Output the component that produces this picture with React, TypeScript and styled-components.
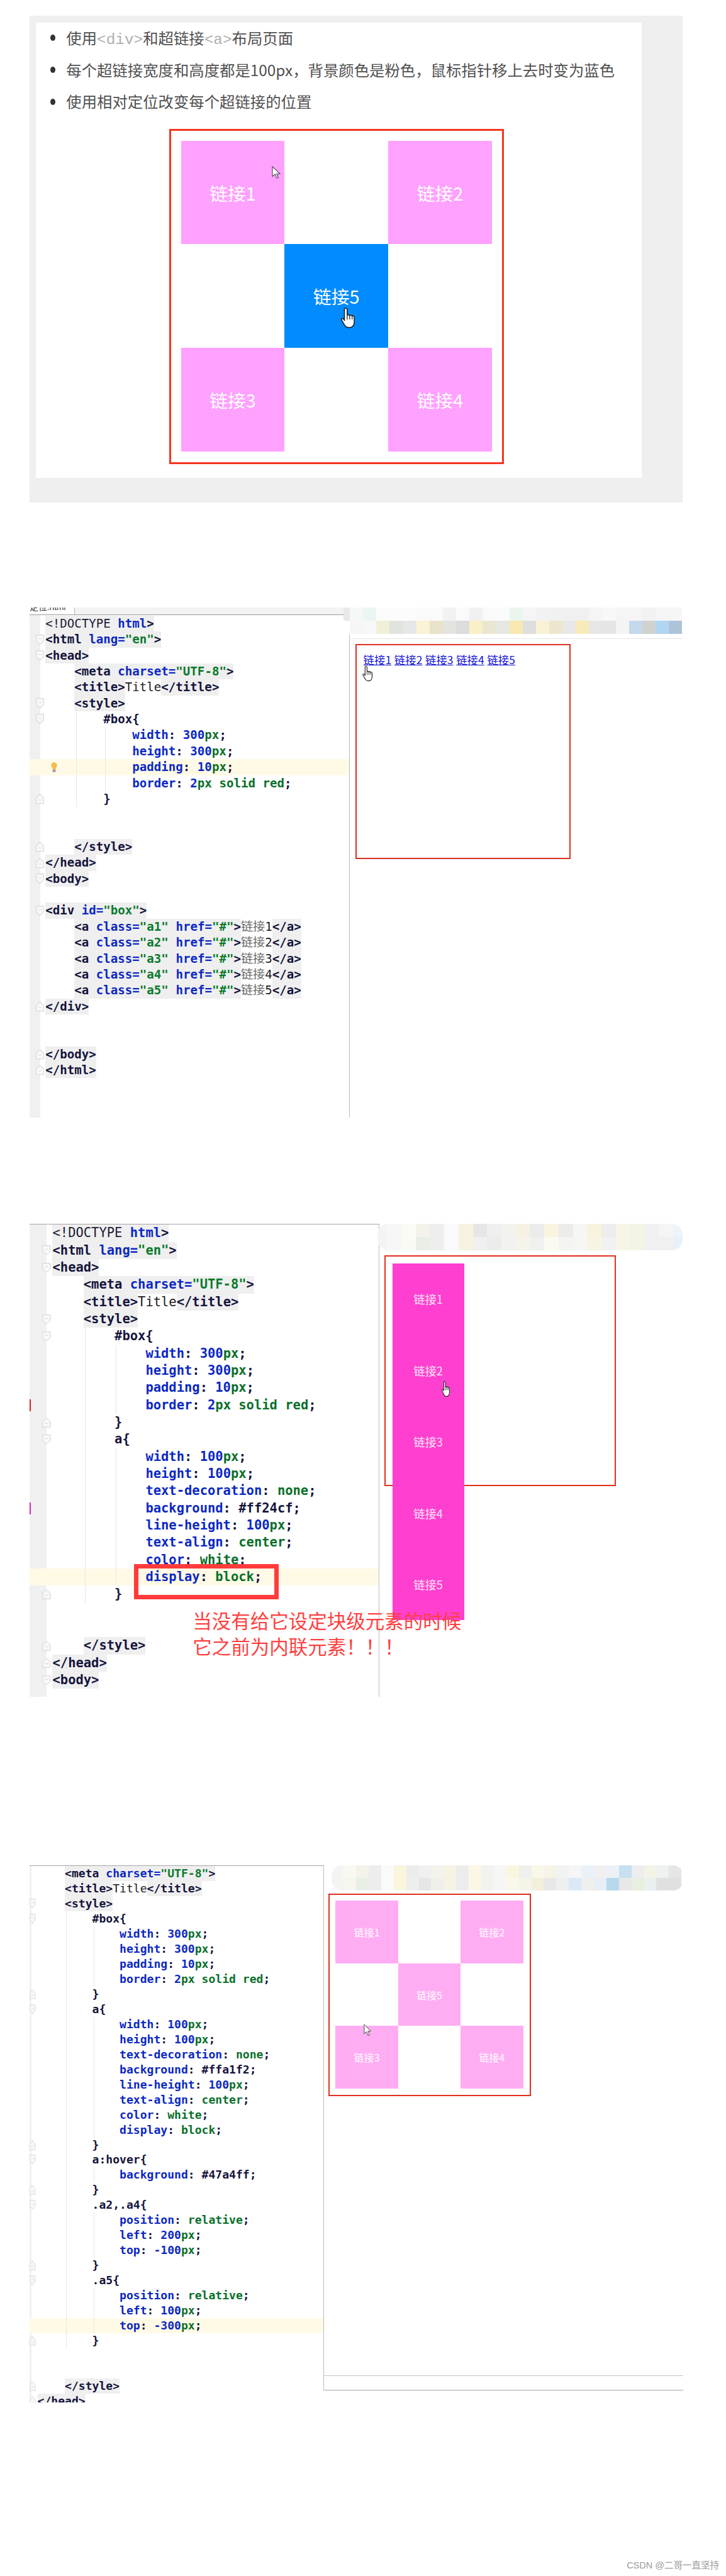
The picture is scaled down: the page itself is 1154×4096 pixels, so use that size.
import React from "react";
import styled, { createGlobalStyle } from "styled-components";

const u = (n: number) => `${(n * 0.726).toFixed(3)}px`;

const GlobalStyle = createGlobalStyle`
  html, body { margin: 0; padding: 0; background: #fff; }
  body { font-family: "Noto Sans CJK SC", "Noto Sans", sans-serif; }
`;

const Page = styled.div`
  width: 1154px;
  height: 4096px;
  overflow: hidden;
  background: #fff;
`;

/* ---------- intro panel ---------- */
const IntroPanel = styled.section`
  margin: ${u(34)} 0 0 ${u(65)};
  width: ${u(1429)};
  box-sizing: border-box;
  padding: ${u(16)} ${u(89)} ${u(53)} ${u(13)};
  background: #efefef;
`;
const IntroSheet = styled.div`
  background: #fff;
  height: ${u(997)};
  overflow: hidden;
`;
const BulletList = styled.ul`
  list-style: none;
  margin: ${u(-2)} 0 ${u(25)};
  padding: 0 0 0 ${u(67)};
`;
const BulletItem = styled.li`
  height: ${u(70)};
  line-height: ${u(70)};
  font-size: ${u(33.6)};
  color: #505050;
  white-space: nowrap;
  position: relative;
  &::before {
    content: "";
    position: absolute;
    left: ${u(-35)};
    top: ${u(28)};
    width: ${u(11)};
    height: ${u(14)};
    border-radius: 50%;
    background: #333;
  }
`;
const CodeWord = styled.span`
  font-family: "Liberation Mono", monospace;
  color: #b0b0b0;
`;

/* ---------- boxes with links ---------- */
const RedBox = styled.div<{ $w: number; $h: number; $line: number; $pad: number; $x: number; $color: string }>`
  position: relative;
  box-sizing: border-box;
  width: ${(p) => u(p.$w)};
  height: ${(p) => u(p.$h)};
  margin-left: ${(p) => u(p.$x)};
  padding: ${(p) => u(p.$pad)};
  border: ${(p) => u(p.$line)} solid ${(p) => p.$color};
  background: #fff;
`;
const CellGrid = styled.div<{ $cell: number }>`
  display: grid;
  grid-template-columns: repeat(3, ${(p) => u(p.$cell)});
  grid-template-rows: repeat(3, ${(p) => u(p.$cell)});
`;
const LinkCell = styled.div<{ $col: number; $row: number; $bg: string; $size: number }>`
  grid-column: ${(p) => p.$col};
  grid-row: ${(p) => p.$row};
  display: flex;
  align-items: center;
  justify-content: center;
  background: ${(p) => p.$bg};
  color: #fff;
  font-size: ${(p) => u(p.$size)};
`;
const InlineLinks = styled.div`
  display: flex;
  gap: ${u(6.5)};
  line-height: ${u(33)};
  font-size: ${u(24)};
`;
const PlainLink = styled.span`
  color: #1414d8;
  text-decoration: underline;
`;
const BlockStack = styled.div`
  width: ${u(157)};
`;
const BlockLink = styled.div`
  height: ${u(156.4)};
  display: flex;
  align-items: center;
  justify-content: center;
  background: #ff3fcf;
  color: #fbe6f8;
  font-size: ${u(25)};
`;
const Pointer = styled.svg<{ $x: number; $y: number; $w: number; $h: number }>`
  position: absolute;
  left: ${(p) => u(p.$x)};
  top: ${(p) => u(p.$y)};
  width: ${(p) => u(p.$w)};
  height: ${(p) => u(p.$h)};
  z-index: 3;
`;

const Hand = (p: { x: number; y: number; w: number; h: number }) => (
  <Pointer $x={p.x} $y={p.y} $w={p.w} $h={p.h} viewBox="0 0 20 26" preserveAspectRatio="none">
    <path
      d="M7 1.5c1 0 1.6.7 1.6 1.7V10c.3-.8 2.6-.9 2.9.3.5-.7 2.5-.6 2.8.5.6-.5 2.4-.3 2.5 1.2V18c0 3.5-2 6.5-5.5 6.5H10c-2 0-3.2-1-4.2-2.6L2 15.5c-.6-1.1.9-2.4 2-1.4l1.4 1.6V3.2C5.4 2.2 6 1.5 7 1.5z"
      fill="#fff"
      stroke="#222"
      strokeWidth="1.2"
    />
    <path d="M8.6 10v5M11.5 10.3V15M14.3 10.8V15" stroke="#222" strokeWidth="0.9" fill="none" />
  </Pointer>
);
const Arrow = (p: { x: number; y: number; w: number; h: number }) => (
  <Pointer $x={p.x} $y={p.y} $w={p.w} $h={p.h} viewBox="0 0 14 22" preserveAspectRatio="none">
    <path d="M1 1v17l4.2-4 2.8 7 2.6-1-2.8-6.8H13z" fill="#fff" stroke="#444" strokeWidth="1.1" />
  </Pointer>
);

/* ---------- editor screenshots ---------- */
const Shot = styled.section<{ $gap: number; $h: number }>`
  position: relative;
  display: flex;
  align-items: flex-start;
  margin: ${(p) => u(p.$gap)} 0 0 ${u(65)};
  width: ${u(1429)};
  height: ${(p) => u(p.$h)};
`;
const Editor = styled.div<{ $w: number; $h: number; $gutter: number; $top: boolean }>`
  flex: none;
  width: ${(p) => u(p.$w)};
  height: ${(p) => u(p.$h)};
  overflow: hidden;
  box-sizing: border-box;
  border-top: ${(p) => (p.$top ? `${u(2)} solid #a6a6a6` : "none")};
  background: linear-gradient(to right, #f0f0f0 ${(p) => u(p.$gutter)}, #fff ${(p) => u(p.$gutter)});
`;
const TabBar = styled.div`
  display: flex;
  height: ${u(16)};
  box-sizing: border-box;
  background: #f3f3f3;
  border-bottom: ${u(2)} solid #9a9a9a;
`;
const Tab = styled.div`
  width: ${u(98)};
  overflow: hidden;
  display: flex;
  gap: ${u(14)};
  background: #fff;
  border-right: ${u(1.5)} solid #b5b5b5;
  font-size: ${u(19)};
  color: #333;
`;
const TabLabel = styled.span`
  margin-top: ${u(-17)};
  white-space: nowrap;
  font-family: "Liberation Sans", "Noto Sans CJK SC", sans-serif;
`;
const CodeArea = styled.div<{ $font: number; $pitch: number; $pad: number }>`
  padding-top: ${(p) => u(p.$pad)};
  font-family: "DejaVu Sans Mono", "Noto Sans CJK SC", monospace;
  font-size: ${(p) => u(p.$font)};
  line-height: ${(p) => u(p.$pitch)};
  white-space: pre;
`;
const Row = styled.div<{ $pitch: number; $pad: number; $hl: boolean }>`
  position: relative;
  display: flex;
  height: ${(p) => u(p.$pitch)};
  padding-left: ${(p) => u(p.$pad)};
  background: ${(p) => (p.$hl ? "#fffae6" : "transparent")};
`;
const COLORS: Record<string, string> = {
  doc: "#1c1c34",
  tag: "#14143c",
  attr: "#0b28c4",
  str: "#0a7a2c",
  text: "#1c1c1c",
  cjk: "#6a6a6a",
  plain: "transparent",
  sel: "#14143c",
  prop: "#0b28c4",
  num: "#0b28c4",
  val: "#0a6f2a",
};
const Token = styled.span<{ $k: string; $m: boolean }>`
  color: ${(p) => COLORS[p.$k]};
  font-weight: ${(p) => (p.$k === "doc" || p.$k === "cjk" || (p.$k === "text" && !p.$m) ? 400 : 700)};
  background: ${(p) => (p.$m ? "#efefef" : "transparent")};
`;
const IndentGuide = styled.i<{ $x: number }>`
  position: absolute;
  top: 0;
  bottom: 0;
  left: ${(p) => u(p.$x)};
  width: 1px;
  background: #e6e6e6;
`;
const FoldIcon = styled.svg<{ $x: number; $w: number; $h: number; $pitch: number; $flip: boolean }>`
  position: absolute;
  left: ${(p) => u(p.$x)};
  top: ${(p) => u((p.$pitch - p.$h) / 2)};
  width: ${(p) => u(p.$w)};
  height: ${(p) => u(p.$h)};
  transform: ${(p) => (p.$flip ? "scaleY(-1)" : "none")};
`;
const BulbIcon = styled.svg`
  position: absolute;
  left: ${u(46)};
  top: ${u(6)};
  width: ${u(14)};
  height: ${u(23)};
`;
const ChangeMark = styled.i<{ $c: string }>`
  position: absolute;
  left: 0;
  top: 15%;
  bottom: 15%;
  width: ${u(2.5)};
  background: ${(p) => p.$c};
`;

/* ---------- browser side ---------- */
const Pane = styled.div<{ $h?: number }>`
  flex: 1;
  display: flex;
  flex-direction: column;
  box-sizing: border-box;
  height: ${(p) => (p.$h ? u(p.$h) : "100%")};
  border-left: ${u(2)} solid #bdbdbd;
`;
const Mosaic = styled.div<{ $x: number; $w: number; $round: number }>`
  position: relative;
  z-index: 1;
  margin-left: ${(p) => u(p.$x)};
  width: ${(p) => u(p.$w)};
  overflow: hidden;
  border-radius: ${(p) => u(p.$round)};
`;
const MosaicRow = styled.div<{ $h: number }>`
  display: flex;
  height: ${(p) => u(p.$h)};
`;
const MosaicCell = styled.i<{ $w: number; $c: string }>`
  flex: none;
  width: ${(p) => u(p.$w)};
  background: ${(p) => p.$c};
`;
const Divider = styled.div<{ $y: number }>`
  flex: none;
  height: ${u(2)};
  margin-top: ${(p) => u(p.$y)};
  background: #e4e4e4;
`;
const Gap = styled.div<{ $h: number }>`
  flex: none;
  height: ${(p) => u(p.$h)};
`;
const StatusBar = styled.div`
  margin-top: auto;
  height: ${u(33)};
  flex: none;
  box-sizing: border-box;
  border-top: ${u(1.5)} solid #c4c4c4;
  border-bottom: ${u(2)} solid #a8a8a8;
`;
const AnnotationFrame = styled.div`
  position: absolute;
  z-index: 4;
  left: ${u(228)};
  top: ${u(745)};
  width: ${u(317)};
  height: ${u(77)};
  box-sizing: border-box;
  border: ${u(10)} solid #ff3b3b;
`;
const AnnotationText = styled.div`
  position: absolute;
  z-index: 4;
  left: ${u(357)};
  top: ${u(840)};
  font-size: ${u(42)};
  line-height: ${u(56)};
  color: #ff4040;
  white-space: nowrap;
`;
const Credit = styled.footer`
  margin-top: ${u(346)};
  padding-right: ${u(15)};
  text-align: right;
  font-family: "Liberation Sans", "Noto Sans CJK SC", sans-serif;
  font-size: ${u(20)};
  line-height: ${u(24)};
  color: #9a9a9a;
`;

/* ---------- tokenizer ---------- */
type Tok = { k: string; t: string; m: boolean };
const tokenize = (line: string): Tok[] => {
  const lead = (line.match(/^ */) as RegExpMatchArray)[0];
  const rest = line.slice(lead.length);
  const out: Tok[] = lead ? [{ k: "plain", t: lead, m: false }] : [];
  if (rest.startsWith("<")) {
    const parts = rest.match(/<\/?[\w!]+|>|\s+|[\w-]+=|"[^"]*"|[\u4e00-\u9fff]+|[^<>\s"=\u4e00-\u9fff]+/g) || [];
    let afterDoc = false;
    parts.forEach((t) => {
      if (t.startsWith("<!")) { out.push({ k: "doc", t, m: true }); afterDoc = true; }
      else if (t[0] === "<" || t[0] === ">") out.push({ k: "tag", t, m: true });
      else if (/^\s/.test(t)) out.push({ k: "tag", t, m: true });
      else if (t.endsWith("=")) out.push({ k: "attr", t, m: true });
      else if (t[0] === '"') out.push({ k: "str", t, m: true });
      else if (/[\u4e00-\u9fff]/.test(t)) out.push({ k: "cjk", t, m: false });
      else if (afterDoc) out.push({ k: "attr", t, m: true });
      else out.push({ k: "text", t, m: false });
    });
    return out;
  }
  const decl = rest.match(/^([\w-]+)(: )(.*)(;)$/);
  if (decl) {
    out.push({ k: "prop", t: decl[1], m: false });
    out.push({ k: "sel", t: decl[2], m: false });
    (decl[3].match(/#\w+|-?\d+|\s+|[a-z]+/g) || []).forEach((t) => {
      if (t[0] === "#") out.push({ k: "sel", t, m: false });
      else if (/\d/.test(t)) out.push({ k: "num", t, m: false });
      else out.push({ k: "val", t, m: false });
    });
    out.push({ k: "sel", t: ";", m: false });
    return out;
  }
  if (rest) out.push({ k: "sel", t: rest, m: false });
  return out;
};

/* ---------- code blocks ---------- */
type Spec = {
  lines: string[];
  open: number[];
  close: number[];
  g4: [number, number][];
  g8: [number, number][];
  hl: number;
  bulb?: boolean;
  marks?: Record<number, string>;
  font: number;
  pitch: number;
  cw: number;
  pad: number;
  base: number;
  top: number;
  foldX: number;
  foldW: number;
  foldH: number;
};
const inRanges = (r: [number, number][], i: number) => r.some(([a, b]) => i >= a && i <= b);

const CodeBlock = ({ s }: { s: Spec }) => (
  <CodeArea $font={s.font} $pitch={s.pitch} $pad={s.top}>
    {s.lines.map((line, i) => {
      const isOpen = s.open.includes(i);
      const isClose = s.close.includes(i);
      return (
        <Row key={i} $pitch={s.pitch} $pad={s.pad} $hl={i === s.hl}>
          {inRanges(s.g4, i) && <IndentGuide $x={s.pad + s.base * s.cw + 3} />}
          {inRanges(s.g8, i) && <IndentGuide $x={s.pad + (s.base + 4) * s.cw + 3} />}
          {s.marks && s.marks[i] && <ChangeMark $c={s.marks[i]} />}
          {(isOpen || isClose) && (
            <FoldIcon $x={s.foldX} $w={s.foldW} $h={s.foldH} $pitch={s.pitch} $flip={isClose} viewBox="0 0 18 20" preserveAspectRatio="none">
              <path d="M1 1h16v11l-8 7-8-7z" fill="#f8f8f8" stroke="#cfcfcf" strokeWidth="1.2" />
              <path d="M5 8h8" stroke="#d4d4d4" strokeWidth="1" />
            </FoldIcon>
          )}
          {s.bulb && i === s.hl && (
            <BulbIcon viewBox="0 0 14 23">
              <circle cx="7" cy="7" r="6.5" fill="#f6bd4b" />
              <rect x="3.5" y="13" width="7" height="3" fill="#f0a93a" />
              <rect x="3.5" y="16.5" width="7" height="5" rx="1" fill="#9a9a9a" />
            </BulbIcon>
          )}
          {tokenize(line).map((t, j) => (
            <Token key={j} $k={t.k} $m={t.m}>{t.t}</Token>
          ))}
        </Row>
      );
    })}
  </CodeArea>
);

const head = ["<!DOCTYPE html>", '<html lang="en">', "<head>", '    <meta charset="UTF-8">', "    <title>Title</title>", "    <style>"];

const specA: Spec = {
  lines: [
    ...head,
    "        #box{",
    "            width: 300px;",
    "            height: 300px;",
    "            padding: 10px;",
    "            border: 2px solid red;",
    "        }",
    "",
    "",
    "    </style>",
    "</head>",
    "<body>",
    "",
    '<div id="box">',
    '    <a class="a1" href="#">链接1</a>',
    '    <a class="a2" href="#">链接2</a>',
    '    <a class="a3" href="#">链接3</a>',
    '    <a class="a4" href="#">链接4</a>',
    '    <a class="a5" href="#">链接5</a>',
    "</div>",
    "",
    "",
    "</body>",
    "</html>",
  ],
  open: [1, 2, 5, 6, 16, 18],
  close: [11, 14, 15, 24, 27, 28],
  g4: [[6, 11]],
  g8: [[7, 10]],
  hl: 9,
  bulb: true,
  font: 26.35,
  pitch: 34.95,
  cw: 15.9,
  pad: 34.5,
  base: 4,
  top: 1.5,
  foldX: 14,
  foldW: 18,
  foldH: 23,
};

const specB: Spec = {
  lines: [
    ...head,
    "        #box{",
    "            width: 300px;",
    "            height: 300px;",
    "            padding: 10px;",
    "            border: 2px solid red;",
    "        }",
    "        a{",
    "            width: 100px;",
    "            height: 100px;",
    "            text-decoration: none;",
    "            background: #ff24cf;",
    "            line-height: 100px;",
    "            text-align: center;",
    "            color: white;",
    "            display: block;",
    "        }",
    "",
    "",
    "    </style>",
    "</head>",
    "<body>",
  ],
  open: [1, 2, 5, 6, 12, 26],
  close: [11, 21, 24, 25],
  g4: [[6, 21]],
  g8: [[7, 10], [13, 20]],
  hl: 20,
  marks: { 10: "#d22", 16: "#d02bb0" },
  font: 28.2,
  pitch: 37.65,
  cw: 17,
  pad: 50,
  base: 4,
  top: 0,
  foldX: 27,
  foldW: 19,
  foldH: 22,
};

const specC: Spec = {
  lines: [
    '    <meta charset="UTF-8">',
    "    <title>Title</title>",
    "    <style>",
    "        #box{",
    "            width: 300px;",
    "            height: 300px;",
    "            padding: 10px;",
    "            border: 2px solid red;",
    "        }",
    "        a{",
    "            width: 100px;",
    "            height: 100px;",
    "            text-decoration: none;",
    "            background: #ffa1f2;",
    "            line-height: 100px;",
    "            text-align: center;",
    "            color: white;",
    "            display: block;",
    "        }",
    "        a:hover{",
    "            background: #47a4ff;",
    "        }",
    "        .a2,.a4{",
    "            position: relative;",
    "            left: 200px;",
    "            top: -100px;",
    "        }",
    "        .a5{",
    "            position: relative;",
    "            left: 100px;",
    "            top: -300px;",
    "        }",
    "",
    "",
    "    </style>",
    "</head>",
  ],
  open: [2, 3, 9, 19, 22, 27],
  close: [8, 18, 21, 26, 31, 34, 35],
  g4: [[3, 31]],
  g8: [[4, 7], [10, 17], [20, 20], [23, 25], [28, 30]],
  hl: 30,
  font: 24.9,
  pitch: 33,
  cw: 15,
  pad: 17,
  base: 4,
  top: 0,
  foldX: 0,
  foldW: 13,
  foldH: 22,
};

/* ---------- mosaics (blurred-out bookmarks) ---------- */
const mosaicA = [
  ["#e8e8e8", "#f6f8f7", "#eaf6f1", "#fcfcfc", "#fcfcfc", "#fcfcfc", "#fafafa", "#fafafa", "#f2f2f2", "#fafafa", "#f1f1f1", "#fafafa", "#fbfbfb", "#eaf5ee", "#f5f5f5", "#f1f3f2", "#f1f1f1", "#f0f0f0", "#f0f0f0", "#f5f5f5", "#f8f8f8", "#f5f5f5", "#f5f5f5", "#f2f2f2", "#f5f5f5", "#f6f6f6"],
  ["#ffffff", "#f6f6f6", "#f8f8f8", "#f0f0d8", "#e2e2de", "#e6e7e9", "#faf3d6", "#e8e2c8", "#e3e3e0", "#dcdcdc", "#faf0c8", "#eae6d2", "#e6e6e2", "#f8e8b0", "#dedede", "#f8f2d4", "#ece6ce", "#e8e8e8", "#f9ebb8", "#e6e6e6", "#e5e6e4", "#f4f4f4", "#c5d9ec", "#d0d2d0", "#b0d6f2", "#adc4d8"],
];
const mosaicB = [
  ["#f4f4f4", "#f7f7f7", "#fbfbf6", "#f4f2ea", "#eeeeee", "#fafafa", "#f8f3e0", "#e6e6e6", "#efefef", "#f2f2ee", "#f6f1e2", "#ebebea", "#f8f4e0", "#ececea", "#f6f6f4", "#f8f3dc", "#ecedec", "#f7f5e6", "#f5f3e6", "#f0f0f0", "#f5f5f5", "#eef3f9"],
  ["#f4f4f4", "#f7f7f7", "#fbfbf6", "#e9efe6", "#eeeeee", "#fafafa", "#f8f3e0", "#f0f0f0", "#ececec", "#f2f2f0", "#f6f4ea", "#f0f0ee", "#fafaf0", "#f4f4f0", "#f6f6f4", "#f7f4e4", "#f0f1f0", "#f7f5e6", "#f5f3e6", "#f0f0f0", "#f0f0f0", "#e8f0fa"],
];
const mosaicC = [
  ["#f4f4f4", "#f9f9f2", "#f3f3ea", "#ededed", "#fafafa", "#faf5dc", "#ececec", "#f0f0f0", "#f3f3ec", "#f7f3e2", "#ececec", "#fcf7e4", "#f2f2ee", "#f6f6f6", "#faf6de", "#eef0ee", "#f9f7e8", "#f6f4e6", "#f1f3f3", "#f6f6f6", "#eaf1f9", "#f0f0f0", "#edf1f6", "#c6e0f0", "#ededed", "#f3f3e8", "#eef2f2", "#e6e6e6"],
  ["#f4f4f4", "#f6f6ee", "#e8efe4", "#ededed", "#fafafa", "#faf5dc", "#eeeeee", "#e6e6e6", "#f0f0ea", "#f7f3e2", "#ececec", "#fcf7e4", "#f2f2ee", "#f6f6f6", "#faf8ea", "#f4f4e8", "#f3efdc", "#e8e8e8", "#eef0f0", "#dbe9f7", "#efefef", "#e8eef5", "#b8d8ec", "#e8e8e8", "#e8eee0", "#eaf0f0", "#e0e0e0", "#e0e0e0"],
];
const Blur = ({ rows, cell, first, h, x, w, round }: { rows: string[][]; cell: number; first: number; h: number; x: number; w: number; round: number }) => (
  <Mosaic $x={x} $w={w} $round={round}>
    {rows.map((r, i) => (
      <MosaicRow key={i} $h={h}>
        {r.map((c, j) => (
          <MosaicCell key={j} $w={j === 0 ? first : cell} $c={c} />
        ))}
      </MosaicRow>
    ))}
  </Mosaic>
);

const PINK_CELLS: [string, number, number][] = [
  ["链接1", 1, 1],
  ["链接2", 3, 1],
  ["链接3", 1, 3],
  ["链接4", 3, 3],
];

export default function App() {
  return (
    <Page>
      <GlobalStyle />
      <IntroPanel>
        <IntroSheet>
          <BulletList>
            <BulletItem>使用<CodeWord>&lt;div&gt;</CodeWord>和超链接<CodeWord>&lt;a&gt;</CodeWord>布局页面</BulletItem>
            <BulletItem>每个超链接宽度和高度都是100px，背景颜色是粉色，鼠标指针移上去时变为蓝色</BulletItem>
            <BulletItem>使用相对定位改变每个超链接的位置</BulletItem>
          </BulletList>
          <RedBox $w={733} $h={733} $line={5} $pad={21} $x={293} $color="#f4341f">
            <CellGrid $cell={227}>
              {PINK_CELLS.map(([t, c, r]) => (
                <LinkCell key={t} $col={c} $row={r} $bg="#ffa1ff" $size={39.7}>{t}</LinkCell>
              ))}
              <LinkCell $col={2} $row={2} $bg="#008cff" $size={39.7}>链接5</LinkCell>
            </CellGrid>
            <Arrow x={220} y={77} w={19} h={28} />
            <Hand x={369} y={385} w={38} h={48} />
          </RedBox>
        </IntroSheet>
      </IntroPanel>

      <Shot $gap={231} $h={1117}>
        <Editor $w={699} $h={1117} $gutter={23} $top={false}>
          <TabBar>
            <Tab>
              <TabLabel>定位.html</TabLabel>
              <TabLabel>^</TabLabel>
            </Tab>
          </TabBar>
          <CodeBlock s={specA} />
        </Editor>
        <Pane>
          <Blur rows={mosaicA} cell={29.1} first={14.5} h={29} x={-14} w={743} round={0} />
          <Divider $y={9} />
          <Gap $h={11} />
          <RedBox $w={471} $h={471} $line={3} $pad={14.5} $x={13} $color="#d8301e">
            <InlineLinks>
              {[1, 2, 3, 4, 5].map((n) => (
                <PlainLink key={n}>链接{n}</PlainLink>
              ))}
            </InlineLinks>
            <Hand x={11} y={43} w={27} h={36} />
          </RedBox>
        </Pane>
      </Shot>

      <Shot $gap={233} $h={1036}>
        <Editor $w={764} $h={1036} $gutter={37} $top>
          <CodeBlock s={specB} />
        </Editor>
        <Pane>
          <Blur rows={mosaicB} cell={31.3} first={21} h={28.5} x={-4} w={668} round={24} />
          <Gap $h={11} />
          <RedBox $w={507} $h={506} $line={3} $pad={15} $x={11} $color="#e0301e">
            <BlockStack>
              {[1, 2, 3, 4, 5].map((n) => (
                <BlockLink key={n}>链接{n}</BlockLink>
              ))}
            </BlockStack>
            <Hand x={121} y={272} w={22} h={37} />
          </RedBox>
        </Pane>
        <AnnotationFrame />
        <AnnotationText>
          当没有给它设定块级元素的时候
          <br />
          它之前为内联元素！！！
        </AnnotationText>
      </Shot>

      <Shot $gap={369} $h={1176}>
        <Editor $w={643} $h={1176} $gutter={4} $top>
          <CodeBlock s={specC} />
        </Editor>
        <Pane $h={1150}>
          <Blur rows={mosaicC} cell={27.4} first={26} h={27.5} x={17} w={769} round={22} />
          <Gap $h={6} />
          <RedBox $w={444.5} $h={443.5} $line={3} $pad={13.6} $x={9} $color="#e0301e">
            <CellGrid $cell={137}>
              {PINK_CELLS.map(([t, c, r]) => (
                <LinkCell key={t} $col={c} $row={r} $bg="#ffadf3" $size={22}>{t}</LinkCell>
              ))}
              <LinkCell $col={2} $row={2} $bg="#ffadf3" $size={22}>链接5</LinkCell>
            </CellGrid>
            <Arrow x={75} y={283} w={17} h={27} />
          </RedBox>
          <StatusBar />
        </Pane>
      </Shot>

      <Credit>CSDN @二哥一直坚持</Credit>
    </Page>
  );
}
